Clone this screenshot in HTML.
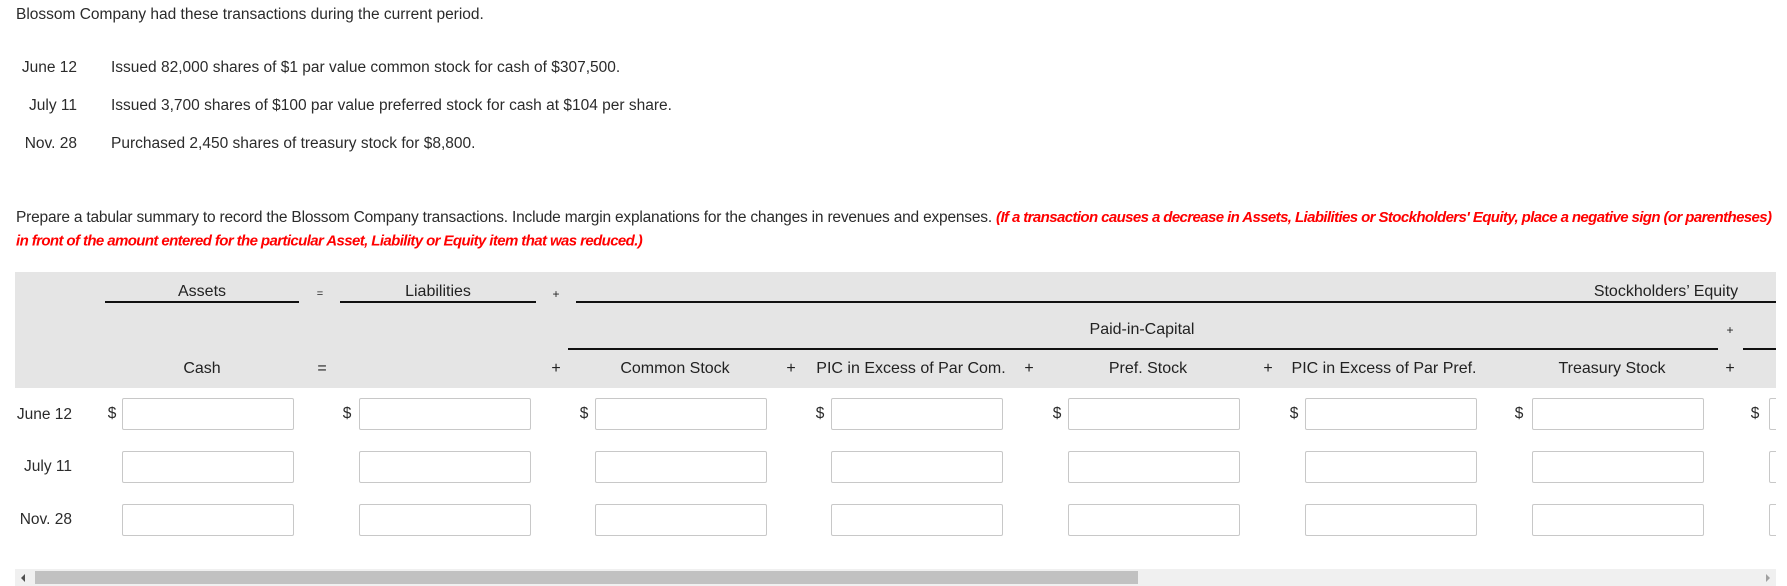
<!DOCTYPE html>
<html><head><meta charset="utf-8"><style>
*{margin:0;padding:0;box-sizing:border-box}
body{width:1787px;height:586px;overflow:hidden;background:#fff;font-family:"Liberation Sans",sans-serif;color:#2b2b2b;position:relative;font-size:15.5px}
.a{position:absolute;white-space:nowrap}
.c{transform:translate(-50%,-50%)}
.l{transform:translateY(-50%)}
.r{transform:translate(-100%,-50%)}
.red{color:#f00;font-style:italic;font-weight:bold;font-size:15px;letter-spacing:-0.6px}
.hl{position:absolute;height:2px;background:#111}
.in{position:absolute;width:172px;height:32px;border:1px solid #c8c8c8;border-radius:2px;background:#fff}
.h{font-size:16px;color:#222}
</style></head><body>
<div class="a l" style="left:16px;top:15px">Blossom Company had these transactions during the current period.</div>
<div class="a r" style="left:77px;top:68px">June 12</div>
<div class="a l" style="left:111px;top:68px">Issued 82,000 shares of $1 par value common stock for cash of $307,500.</div>
<div class="a r" style="left:77px;top:106px">July 11</div>
<div class="a l" style="left:111px;top:106px">Issued 3,700 shares of $100 par value preferred stock for cash at $104 per share.</div>
<div class="a r" style="left:77px;top:144px">Nov. 28</div>
<div class="a l" style="left:111px;top:144px">Purchased 2,450 shares of treasury stock for $8,800.</div>
<div class="a l" style="left:16px;top:218px;letter-spacing:-0.2px">Prepare a tabular summary to record the Blossom Company transactions. Include margin explanations for the changes in revenues and expenses. <span class="red">(If a transaction causes a decrease in Assets, Liabilities or Stockholders' Equity, place a negative sign (or parentheses)</span></div>
<div class="a l red" style="left:16px;top:241px">in front of the amount entered for the particular Asset, Liability or Equity item that was reduced.)</div>

<div style="position:absolute;left:15px;top:272px;width:1761px;height:116px;background:#e5e5e5"></div>
<div class="a c h" style="left:202px;top:292px">Assets</div>
<div class="hl" style="left:105px;top:301px;width:194px"></div>
<div class="a c h" style="left:320px;top:294px;font-size:11px">=</div>
<div class="a c h" style="left:438px;top:292px">Liabilities</div>
<div class="hl" style="left:340px;top:301px;width:196px"></div>
<div class="a c h" style="left:556px;top:294px;font-size:12px">+</div>
<div class="hl" style="left:576px;top:301px;width:1200px"></div>
<div class="a c h" style="left:1666px;top:292px">Stockholders’ Equity</div>
<div class="a c h" style="left:1142px;top:330px">Paid-in-Capital</div>
<div class="a c h" style="left:1730px;top:330px;font-size:12px">+</div>
<div class="hl" style="left:568px;top:348px;width:1150px"></div>
<div class="hl" style="left:1743px;top:348px;width:33px"></div>
<div class="a c h" style="left:202px;top:369px">Cash</div>
<div class="a c h" style="left:322px;top:369px">=</div>
<div class="a c h" style="left:556px;top:369px">+</div>
<div class="a c h" style="left:675px;top:369px">Common Stock</div>
<div class="a c h" style="left:791px;top:369px">+</div>
<div class="a c h" style="left:911px;top:369px">PIC in Excess of Par Com.</div>
<div class="a c h" style="left:1029px;top:369px">+</div>
<div class="a c h" style="left:1148px;top:369px">Pref. Stock</div>
<div class="a c h" style="left:1268px;top:369px">+</div>
<div class="a c h" style="left:1384px;top:369px">PIC in Excess of Par Pref.</div>
<div class="a c h" style="left:1612px;top:369px">Treasury Stock</div>
<div class="a c h" style="left:1730px;top:369px">+</div>

<div class="a r" style="left:72px;top:415px">June 12</div>
<div class="a r" style="left:72px;top:467px">July 11</div>
<div class="a r" style="left:72px;top:520px">Nov. 28</div>

<div class="a c" style="left:112px;top:414px">$</div>
<div class="a c" style="left:347px;top:414px">$</div>
<div class="a c" style="left:584px;top:414px">$</div>
<div class="a c" style="left:820px;top:414px">$</div>
<div class="a c" style="left:1057px;top:414px">$</div>
<div class="a c" style="left:1294px;top:414px">$</div>
<div class="a c" style="left:1519px;top:414px">$</div>
<div class="a c" style="left:1755px;top:414px">$</div>

<div style="position:absolute;left:0;top:0;width:1776px;height:586px;overflow:hidden">
<div class="in" style="left:122px;top:398px"></div><div class="in" style="left:359px;top:398px"></div><div class="in" style="left:595px;top:398px"></div><div class="in" style="left:831px;top:398px"></div><div class="in" style="left:1068px;top:398px"></div><div class="in" style="left:1305px;top:398px"></div><div class="in" style="left:1532px;top:398px"></div><div class="in" style="left:1769px;top:398px"></div>
<div class="in" style="left:122px;top:451px"></div><div class="in" style="left:359px;top:451px"></div><div class="in" style="left:595px;top:451px"></div><div class="in" style="left:831px;top:451px"></div><div class="in" style="left:1068px;top:451px"></div><div class="in" style="left:1305px;top:451px"></div><div class="in" style="left:1532px;top:451px"></div><div class="in" style="left:1769px;top:451px"></div>
<div class="in" style="left:122px;top:504px"></div><div class="in" style="left:359px;top:504px"></div><div class="in" style="left:595px;top:504px"></div><div class="in" style="left:831px;top:504px"></div><div class="in" style="left:1068px;top:504px"></div><div class="in" style="left:1305px;top:504px"></div><div class="in" style="left:1532px;top:504px"></div><div class="in" style="left:1769px;top:504px"></div>
</div>

<div style="position:absolute;left:15px;top:569px;width:1761px;height:17px;background:#f0f0f0"></div>
<div style="position:absolute;left:35px;top:571px;width:1103px;height:13px;background:#c1c1c1"></div>
<div style="position:absolute;left:21px;top:574px;width:0;height:0;border-top:4px solid transparent;border-bottom:4px solid transparent;border-right:4px solid #505050"></div>
<div style="position:absolute;left:1766px;top:574px;width:0;height:0;border-top:4px solid transparent;border-bottom:4px solid transparent;border-left:4px solid #a0a0a0"></div>
</body></html>
